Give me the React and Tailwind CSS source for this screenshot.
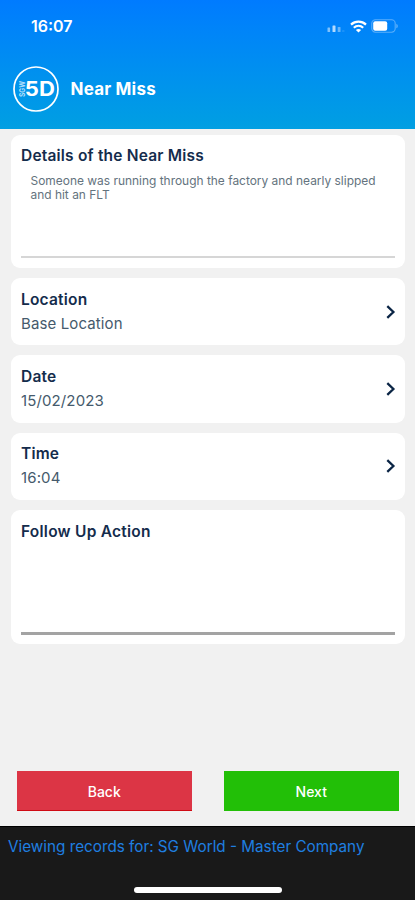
const records = [
    { label: "Location", value: "Base Location" },
    { label: "Date", value: "15/02/2023" },
    { label: "Time", value: "16:04" },
];

function SignalIcon() {
    return (
        <svg width="18" height="10" viewBox="0 0 18 10" fill="white">
            <rect x="0.5" y="4.5" width="2.6" height="4.5" rx="0.6" opacity="0.5" />
            <rect x="5.5" y="2.5" width="3" height="6.5" rx="0.6" opacity="0.7" />
            <rect x="10.7" y="4" width="2.8" height="5" rx="0.6" opacity="0.4" />
            <rect x="15" y="7" width="2.5" height="2" rx="0.6" opacity="0.1" />
        </svg>
    );
}

function WifiIcon() {
    return (
        <svg width="17" height="13" viewBox="0 0 17 13" fill="none" stroke="white" strokeWidth="2.2">
            <path d="M1 4.6C5.2 0.6 11.8 0.6 16 4.6" />
            <path d="M3.8 7.7C6.5 5.3 10.5 5.3 13.2 7.7" />
            <path d="M8.5 12.4L5.9 9.9C7.4 8.6 9.6 8.6 11.1 9.9Z" fill="white" stroke="none" />
        </svg>
    );
}

function BatteryIcon() {
    return (
        <svg width="28" height="14" viewBox="0 0 28 14" fill="none">
            <rect x="0.8" y="0.8" width="23.4" height="12.4" rx="3.6" stroke="white" strokeOpacity="0.35" strokeWidth="1.1" />
            <rect x="2.2" y="2.2" width="14" height="9.6" rx="2" fill="white" />
            <path d="M25.5 4.7C27 5.4 27 8.6 25.5 9.3Z" fill="white" fillOpacity="0.5" />
        </svg>
    );
}

function Logo() {
    return (
        <svg width="46" height="46" viewBox="0 0 46 46" className="font-['Inter',sans-serif]">
            <circle cx="23" cy="23" r="22" fill="none" stroke="white" strokeWidth="1.7" />
            <text transform="translate(12 31) rotate(-90)" fontSize="8" fontWeight="700" fill="white" fillOpacity="0.7" textLength="16" lengthAdjust="spacingAndGlyphs">SGW</text>
            <text x="11.8" y="29.8" fontSize="19.5" fontWeight="700" fill="white" textLength="30" lengthAdjust="spacingAndGlyphs">5D</text>
        </svg>
    );
}

function Chevron() {
    return (
        <svg width="10" height="14" viewBox="0 0 10 14" fill="none" stroke="#0b2545" strokeWidth="2.3">
            <path d="M1.3 1.2L7.4 7L1.3 12.8" />
        </svg>
    );
}

export default function App() {
    return (
        <div className="w-[415px] h-[900px] flex flex-col overflow-hidden bg-[#f1f1f1] font-['Inter',sans-serif] text-[#142c4c]">
            <header className="h-[129px] shrink-0 bg-linear-to-b from-[#007bff] to-[#039fe2] text-white">
                <div className="h-[52px] pl-[31px] pr-[16px] flex items-center justify-between">
                    <p className="text-base font-semibold">16:07</p>
                    <div className="flex items-center">
                        <div className="mt-1"><SignalIcon /></div>
                        <div className="ml-[5px]"><WifiIcon /></div>
                        <div className="ml-[4px]"><BatteryIcon /></div>
                    </div>
                </div>
                <div className="mt-[14px] ml-[12.5px] flex items-center gap-3">
                    <Logo />
                    <h1 className="pt-[2px] text-[17px] font-bold tracking-[0.2px]">Near Miss</h1>
                </div>
            </header>

            <main className="pt-[5.5px] pl-[11px] pr-[10px] flex flex-col gap-[10px]">
                <section className="h-[133.5px] px-[10px] pt-[11.5px] pb-[10px] rounded-[9px] bg-white flex flex-col">
                    <h2 className="text-[15.5px] leading-5 font-semibold tracking-[0.2px]">Details of the Near Miss</h2>
                    <p className="mt-[7.5px] ml-[9.5px] text-[11.95px] leading-[14.5px] text-[#64737e]">
                        Someone was running through the factory and nearly slipped<br />and hit an FLT
                    </p>
                    <div className="mt-auto h-[2.5px] bg-[#d6d6d6]" />
                </section>

                {records.map((record) => (
                    <section key={record.label} className="h-[67.3px] pl-[10px] pr-[9.5px] rounded-[9px] bg-white flex items-center justify-between">
                        <div>
                            <h2 className="text-[15.5px] leading-5 font-semibold tracking-[0.2px]">{record.label}</h2>
                            <p className="mt-1 text-[15px] leading-5 tracking-[0.12px] text-[#455a6c]">{record.value}</p>
                        </div>
                        <Chevron />
                    </section>
                ))}

                <section className="h-[134px] px-[10px] pt-[12px] pb-[9px] rounded-[9px] bg-white flex flex-col">
                    <h2 className="text-[15.5px] leading-5 font-semibold tracking-[0.25px]">Follow Up Action</h2>
                    <div className="mt-auto h-[3px] bg-[#a3a3a3]" />
                </section>
            </main>

            <div className="mt-auto mb-[15px] pl-[16.5px] pr-[16px] flex justify-between text-white text-[14px] font-medium">
                <button className="w-[175.5px] h-[40px] pt-px bg-[#dc3545] border-b border-[#cf0a14]">Back</button>
                <button className="w-[175.5px] h-[40px] bg-[#22bf07]">Next</button>
            </div>

            <footer className="h-[74px] shrink-0 px-2 pt-[9px] pb-[7px] bg-[#191919] border-t border-black flex flex-col items-center justify-between">
                <p className="w-full text-[15.25px] leading-[22px] text-[#1f7fe0] whitespace-nowrap">Viewing records for: SG World - Master Company</p>
                <div className="w-[148px] h-[6px] rounded-full bg-white" />
            </footer>
        </div>
    );
}
